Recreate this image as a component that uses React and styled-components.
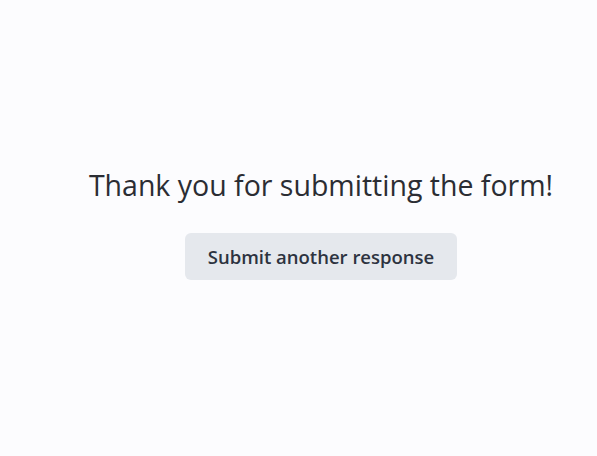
import styled, { createGlobalStyle } from 'styled-components';

const GlobalStyle = createGlobalStyle`
  html, body {
    margin: 0;
    padding: 0;
    background: #fcfcfe;
  }
  body {
    font-family: 'Open Sans', 'Noto Sans', sans-serif;
  }
`;

const Page = styled.div`
  min-height: 100vh;
  box-sizing: border-box;
  display: flex;
  flex-direction: column;
  align-items: center;
  justify-content: center;
  padding-left: 45px;
  padding-bottom: 9px;
`;

const Title = styled.h1`
  margin: 0 0 29px 0;
  font-size: 28.5px;
  font-weight: 400;
  color: #2b2d33;
  line-height: 1.3;
`;

const Button = styled.button`
  width: 272px;
  height: 47px;
  border: none;
  border-radius: 6px;
  background: #e5e8ed;
  color: #2d3340;
  font-family: 'Open Sans', 'Noto Sans', sans-serif;
  font-size: 18.5px;
  font-weight: 600;
  cursor: pointer;
`;

function App() {
  return (
    <>
      <GlobalStyle />
      <Page>
        <Title>Thank you for submitting the form!</Title>
        <Button type="button">Submit another response</Button>
      </Page>
    </>
  );
}

export default App;
